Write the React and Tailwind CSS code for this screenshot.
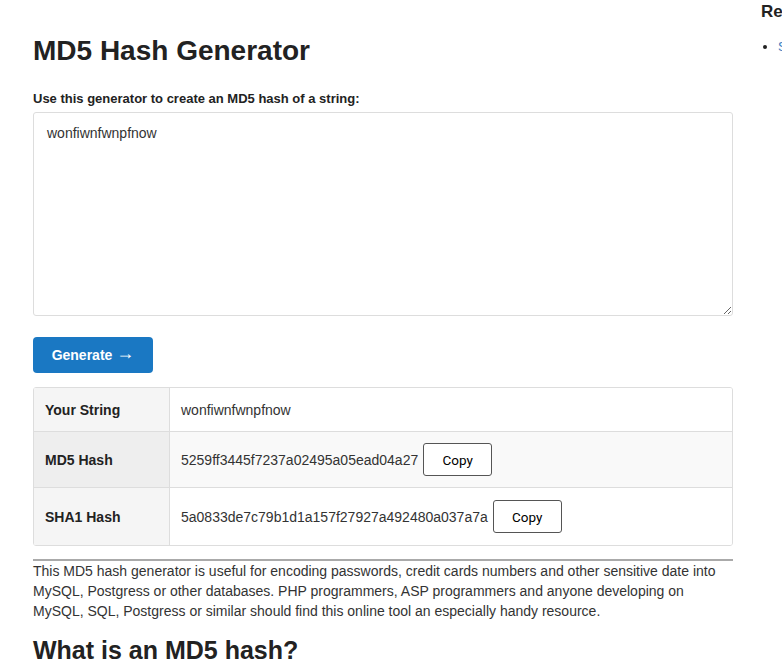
import React from "react";

const rows = [
  { label: "Your String", value: "wonfiwnfwnpfnow" },
  { label: "MD5 Hash", value: "5259ff3445f7237a02495a05ead04a27", copy: true },
  { label: "SHA1 Hash", value: "5a0833de7c79b1d1a157f27927a492480a037a7a", copy: true },
];

const App = () => {
  return (
    <div className="w-[782px] h-[666px] overflow-hidden bg-white text-[#333] font-['Liberation_Sans',Arial,sans-serif]">
      <div className="flex">
        {/* main column */}
        <div className="ml-[33px] w-[700px] shrink-0">
          <h1 className="mt-[35px] text-[28px] leading-[31px] font-bold text-[#222]">
            MD5 Hash Generator
          </h1>
          <label className="block mt-[24px] text-[13px] leading-[18px] font-bold text-[#222]">
            Use this generator to create an MD5 hash of a string:
          </label>
          <textarea
            className="block mt-[4px] w-full h-[204px] border border-[#ddd] rounded-[3px] px-[13px] py-[10px] text-[14px] leading-[20px] text-[#333] resize-y"
            defaultValue="wonfiwnfwnpfnow"
          />
          <button className="mt-[21px] w-[120px] h-[36px] rounded-[4px] bg-[#1a78c3] text-white text-[14px] font-bold flex items-center justify-center">
            Generate
            <span className="ml-[4px] text-[18px] leading-none font-normal mb-[4px]">→</span>
          </button>

          <div className="mt-[14px] border border-[#ddd] rounded-[3px] overflow-hidden">
            {rows.map((r, i) => (
              <div
                key={r.label}
                className={
                  "flex text-[14px] leading-[20px] " +
                  (i > 0 ? "border-t border-[#ddd] " : "") +
                  (i === 1 ? "bg-[#f9f9f9]" : "bg-white")
                }
              >
                <div
                  className={
                    "w-[136px] shrink-0 border-r border-[#ddd] pl-[11px] flex items-center font-bold text-[#222] " +
                    (i === 1 ? "bg-[#eeeeee]" : "bg-[#f5f5f5]")
                  }
                >
                  {r.label}
                </div>
                <div
                  className={
                    "flex items-center pl-[11px] " +
                    (i === 0 ? "pt-[12px] pb-[11px]" : i === 1 ? "py-[11px]" : "py-[12px]")
                  }
                >
                  <span>{r.value}</span>
                  {r.copy && (
                    <button className="ml-[5px] w-[69px] h-[33px] border border-[#555] rounded-[3px] bg-white text-[13.5px] text-black font-['Roboto',sans-serif]">
                      Copy
                    </button>
                  )}
                </div>
              </div>
            ))}
          </div>

          <hr className="mt-[13px] border-0 border-t-[2px] border-[#aaa]" />
          <p className="text-[14px] leading-[20px] text-[#333]">
            This MD5 hash generator is useful for encoding passwords, credit cards
            numbers and other sensitive date into MySQL, Postgress or other
            databases. PHP programmers, ASP programmers and anyone developing on
            MySQL, SQL, Postgress or similar should find this online tool an
            especially handy resource.
          </p>
          <h2 className="mt-[15px] text-[25px] leading-[28px] font-bold text-[#222]">
            What is an MD5 hash?
          </h2>
        </div>

        {/* sidebar */}
        <div className="ml-[28px] w-[220px] shrink-0">
          <h3 className="mt-[2px] text-[17px] leading-[20px] font-bold text-[#222] whitespace-nowrap">
            Related Tools
          </h3>
          <ul className="mt-[16px] list-disc pl-[17px] text-[13px] leading-[18px]">
            <li className="text-[#222]">
              <a className="text-[#3a7bbf]">SHA1 Hash Generator</a>
            </li>
          </ul>
        </div>
      </div>
    </div>
  );
};

export default App;
